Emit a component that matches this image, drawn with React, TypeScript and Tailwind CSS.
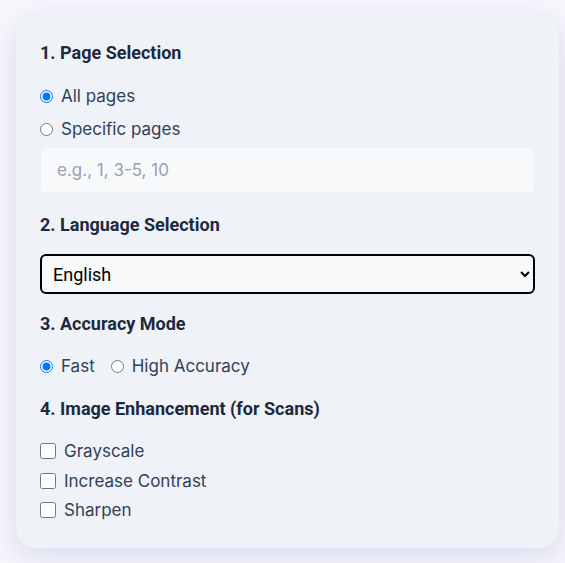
import React from 'react';

const headingCls = "text-[18px] leading-7 font-bold text-slate-800";
const labelCls = "flex items-center text-[17px] leading-6 text-slate-700";

export default function App() {
    return (
        <div className="min-h-[563px] w-[565px] bg-[#f6f6fc] pt-[15px] pl-4" style={{ fontFamily: 'Inter, "Noto Sans", sans-serif' }}>
            <div className="w-[543px] rounded-[20px] bg-[#eff2f7] px-6 pt-6 pb-[26px] shadow-[0_8px_28px_rgba(120,120,200,0.22)]">
                {/* Page selection */}
                <h3 className={headingCls} style={{ fontFamily: 'Roboto, sans-serif' }}>1. Page Selection</h3>
                <div className="mt-[17px] flex flex-col gap-[9px]">
                    <label className={labelCls}>
                        <input type="radio" name="pages" defaultChecked className="m-0 h-[13px] w-[13px]" />
                        <span className="ml-2">All pages</span>
                    </label>
                    <label className={labelCls}>
                        <input type="radio" name="pages" className="m-0 h-[13px] w-[13px]" />
                        <span className="ml-2">Specific pages</span>
                    </label>
                </div>
                <input
                    type="text"
                    placeholder="e.g., 1, 3-5, 10"
                    className="mt-1.5 block h-[46px] w-full rounded border border-[#eef1f5] bg-[#f7f9fb] px-4 text-[17px] text-slate-700 placeholder:text-gray-400 outline-none"
                />

                {/* Language */}
                <h3 className={`${headingCls} mt-[18px]`} style={{ fontFamily: 'Roboto, sans-serif' }}>2. Language Selection</h3>
                <select
                    defaultValue="eng"
                    className="mt-[15px] block h-10 w-full rounded-md border-2 border-black bg-[#f7f9fb] pl-[7px] pr-1 text-[18px] text-black"
                    style={{ fontFamily: 'Roboto, sans-serif' }}
                >
                    <option value="eng">English</option>
                    <option value="spa">Spanish</option>
                    <option value="fra">French</option>
                </select>

                {/* Accuracy */}
                <h3 className={`${headingCls} mt-4`} style={{ fontFamily: 'Roboto, sans-serif' }}>3. Accuracy Mode</h3>
                <div className="mt-4 flex items-center">
                    <label className={labelCls}>
                        <input type="radio" name="acc" defaultChecked className="m-0 h-[13px] w-[13px]" />
                        <span className="ml-2">Fast</span>
                    </label>
                    <label className={`${labelCls} ml-4`}>
                        <input type="radio" name="acc" className="m-0 h-[13px] w-[13px]" />
                        <span className="ml-2">High Accuracy</span>
                    </label>
                </div>

                {/* Enhancement */}
                <h3 className={`${headingCls} mt-[17px]`} style={{ fontFamily: 'Roboto, sans-serif' }}>4. Image Enhancement (for Scans)</h3>
                <div className="mt-4 flex flex-col gap-[5.5px]">
                    {['Grayscale', 'Increase Contrast', 'Sharpen'].map(l => (
                        <label key={l} className={labelCls}>
                            <input type="checkbox" className="m-0 h-4 w-4" />
                            <span className="ml-2">{l}</span>
                        </label>
                    ))}
                </div>
            </div>
        </div>
    );
}
